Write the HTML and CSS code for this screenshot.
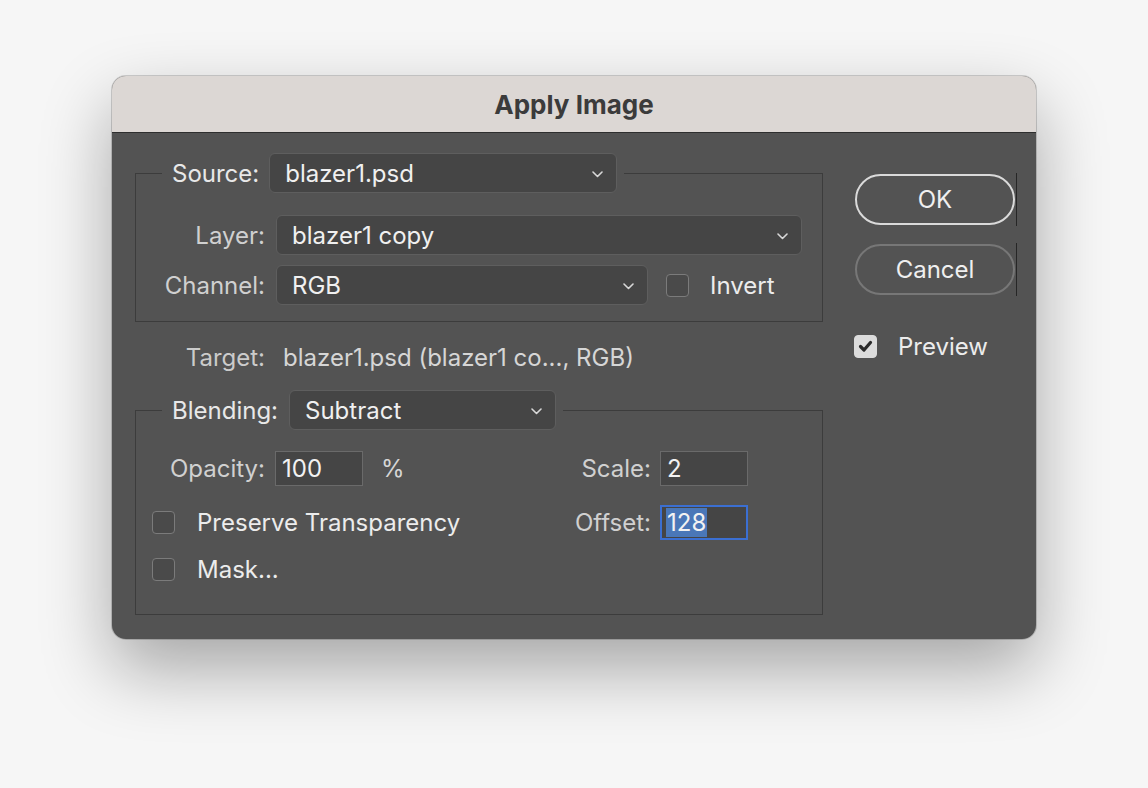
FILE: index.html
```html
<!DOCTYPE html>
<html lang="en">
<head>
    <meta charset="UTF-8">
    <meta name="viewport" content="width=device-width, initial-scale=1.0">
    <title>Apply Image</title>
    <link rel="stylesheet" href="styles.css">
</head>
<body>
    <div class="dialog">
        <div class="title-bar">Apply Image</div>

        <div class="dialog-body">
            <div class="main-col">
                <fieldset class="group source-group">
                    <legend>
                        <span class="legend-label">Source:</span>
                        <div class="select select-source">
                            <span>blazer1.psd</span>
                            <svg class="chevron" width="11" height="7" viewBox="0 0 11 7"><path d="M1 1 L5.5 5.5 L10 1"/></svg>
                        </div>
                    </legend>
                    <div class="row">
                        <span class="field-label">Layer:</span>
                        <div class="select select-layer">
                            <span>blazer1 copy</span>
                            <svg class="chevron" width="11" height="7" viewBox="0 0 11 7"><path d="M1 1 L5.5 5.5 L10 1"/></svg>
                        </div>
                    </div>
                    <div class="row">
                        <span class="field-label">Channel:</span>
                        <div class="select select-channel">
                            <span>RGB</span>
                            <svg class="chevron" width="11" height="7" viewBox="0 0 11 7"><path d="M1 1 L5.5 5.5 L10 1"/></svg>
                        </div>
                        <span class="checkbox invert-box"></span>
                        <span class="check-text">Invert</span>
                    </div>
                </fieldset>

                <div class="target-row">
                    <span class="field-label target-label">Target:</span>
                    <span class="target-value">blazer1.psd (blazer1 co..., RGB)</span>
                </div>

                <fieldset class="group blend-group">
                    <legend>
                        <span class="legend-label">Blending:</span>
                        <div class="select select-blend">
                            <span>Subtract</span>
                            <svg class="chevron" width="11" height="7" viewBox="0 0 11 7"><path d="M1 1 L5.5 5.5 L10 1"/></svg>
                        </div>
                    </legend>
                    <div class="blend-row">
                        <div class="blend-left">
                            <span class="field-label">Opacity:</span>
                            <div class="input"><span>100</span></div>
                            <span class="unit">%</span>
                        </div>
                        <div class="blend-right">
                            <span class="right-label">Scale:</span>
                            <div class="input"><span>2</span></div>
                        </div>
                    </div>
                    <div class="blend-row">
                        <div class="blend-left">
                            <span class="checkbox opt-box"></span>
                            <span class="check-text">Preserve Transparency</span>
                        </div>
                        <div class="blend-right">
                            <span class="right-label">Offset:</span>
                            <div class="input focused"><span class="selection">128</span></div>
                        </div>
                    </div>
                    <div class="blend-row mask-row">
                        <div class="blend-left">
                            <span class="checkbox opt-box"></span>
                            <span class="check-text">Mask...</span>
                        </div>
                    </div>
                </fieldset>
            </div>

            <div class="side-col">
                <div class="btn-wrap"><div class="btn btn-ok">OK</div></div>
                <div class="btn-wrap"><div class="btn btn-cancel">Cancel</div></div>
                <div class="preview-row">
                    <span class="checkbox checked">
                        <svg width="17" height="17" viewBox="0 0 17 17"><path d="M3.5 8.5 L7 12 L13.5 4.5"/></svg>
                    </span>
                    <span class="check-text">Preview</span>
                </div>
            </div>
        </div>
    </div>
</body>
</html>
```

FILE: styles.css
```css
body {
    margin: 0;
    padding: 76px 0 0;
    min-height: 788px;
    box-sizing: border-box;
    background: #f6f6f6;
    font-family: Inter, "Liberation Sans", sans-serif;
    font-size: 24px;
}

.dialog {
    width: 924px;
    height: 563px;
    margin: 0 auto;
    background: #535353;
    border-radius: 14px;
    overflow: hidden;
    box-shadow: 0 30px 70px rgba(0, 0, 0, 0.33), 0 0 0 1px rgba(0, 0, 0, 0.16);
}

.title-bar {
    height: 56px;
    background: #dcd7d4;
    border-bottom: 1px solid #2e2e2e;
    display: flex;
    align-items: center;
    justify-content: center;
    font-weight: 700;
    font-size: 26px;
    color: #3b3b3b;
}

.dialog-body {
    display: flex;
    gap: 32px;
    padding: 20px 20px 0 23px;
}

.main-col {
    width: 688px;
    flex: none;
}

/* fieldset groups */
.group {
    margin: 0;
    min-width: 0;
    border: 1px solid #3c3c3c;
    padding: 22px 20px 16px 0;
}

.group legend {
    display: flex;
    align-items: center;
    margin-left: 26px;
    padding: 0 7px 0 10px;
}

.legend-label {
    color: #e8e8e8;
}

.select {
    height: 40px;
    box-sizing: border-box;
    background: #454545;
    border: 1px solid #5e5e5e;
    border-radius: 6px;
    display: flex;
    align-items: center;
    justify-content: space-between;
    padding: 0 13px 0 15px;
    color: #f0f0f0;
}

.chevron {
    margin-top: 3px;
}

.chevron path {
    fill: none;
    stroke: #d8d8d8;
    stroke-width: 1.6;
    stroke-linecap: round;
    stroke-linejoin: round;
}

.select-source {
    width: 348px;
    margin-left: 10px;
}

.select-layer {
    width: 527px;
}

.select-channel {
    width: 372px;
}

.select-blend {
    width: 267px;
    margin-left: 11px;
}

.row {
    display: flex;
    align-items: center;
}

.row + .row {
    margin-top: 10px;
}

.field-label {
    width: 129px;
    flex: none;
    text-align: right;
    margin-right: 11px;
    color: #d0d0d0;
}

.checkbox {
    width: 23px;
    height: 23px;
    box-sizing: border-box;
    flex: none;
    border: 1.5px solid #7b7b7b;
    border-radius: 4px;
    background: #4a4a4a;
}

.checkbox.checked {
    background: #dcdcdc;
    border-color: #dcdcdc;
    display: flex;
    align-items: center;
    justify-content: center;
}

.checkbox.checked path {
    fill: none;
    stroke: #2a2a2a;
    stroke-width: 3.2;
    stroke-linecap: round;
    stroke-linejoin: round;
}

.check-text {
    margin-left: 21px;
    color: #ececec;
}

.invert-box {
    margin-left: 18px;
}

/* target line */
.target-row {
    display: flex;
    align-items: center;
    height: 30px;
    margin: 20px 0 18px;
    padding-left: 1px;
}

.target-label {
    margin-right: 18px;
    color: #cbcbcb;
}

.target-value {
    color: #d6d6d6;
}

/* blending group */
.blend-group {
    padding: 21px 74px 33px 0;
}

.blend-row {
    display: flex;
    align-items: center;
    justify-content: space-between;
    height: 35px;
}

.blend-row + .blend-row {
    margin-top: 19px;
}

.blend-row.mask-row {
    height: 23px;
    margin-top: 18px;
}

.blend-left,
.blend-right {
    display: flex;
    align-items: center;
}

.blend-left .field-label {
    margin-right: 10px;
}

.opt-box {
    margin-left: 16px;
}

.opt-box + .check-text {
    margin-left: 22px;
}

.unit {
    margin-left: 18px;
    color: #d6d6d6;
}

.right-label {
    margin-right: 9px;
    color: #d0d0d0;
}

.input {
    width: 88px;
    height: 35px;
    box-sizing: border-box;
    background: #454545;
    border: 1px solid #6a6a6a;
    padding-left: 6px;
    display: flex;
    align-items: center;
    color: #f2f2f2;
}

.input.focused {
    border: 2px solid #3b6fd2;
    padding-left: 4px;
}

.selection {
    background: #4a77b8;
    line-height: 29px;
    padding: 0 1px;
}

/* buttons column */
.side-col {
    width: 162px;
    flex: none;
    padding-top: 20px;
}

.btn-wrap {
    width: 161px;
    border-right: 1px solid #262626;
    padding: 1px 0;
}

.btn-wrap + .btn-wrap {
    margin-top: 17px;
}

.btn {
    width: 160px;
    height: 51px;
    box-sizing: border-box;
    border-radius: 26px;
    border: 2px solid #dadada;
    display: flex;
    align-items: center;
    justify-content: center;
    color: #efefef;
}

.btn-cancel {
    border-color: #777777;
}

.preview-row {
    display: flex;
    align-items: center;
    margin-top: 36px;
    margin-left: -1px;
}
```
